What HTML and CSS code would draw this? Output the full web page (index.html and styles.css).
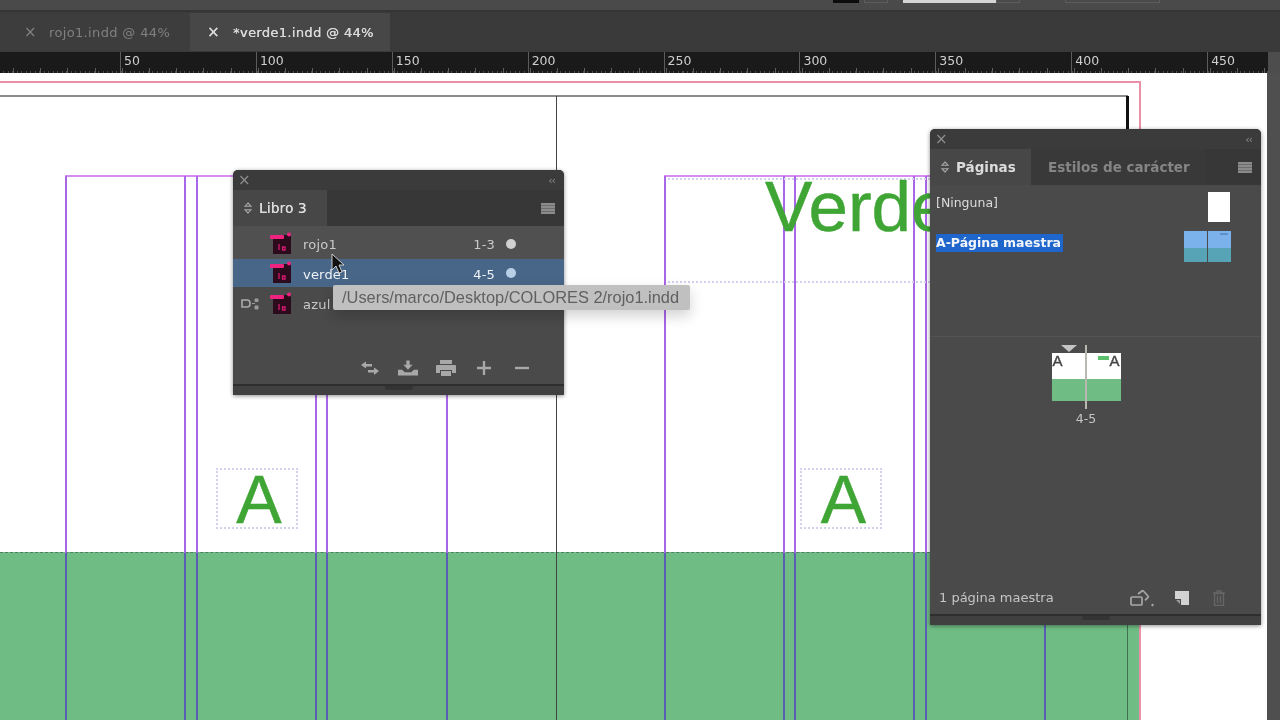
FILE: index.html
```html
<!DOCTYPE html>
<html lang="es">
<head>
<meta charset="utf-8">
<title>InDesign</title>
<link rel="stylesheet" href="styles.css">
</head>
<body>
<div class="app">
  <header class="topbar">
    <span class="ctl c-black"></span><span class="ctl c-box1"></span><span class="ctl c-white"></span><span class="ctl c-box2"></span><span class="ctl c-box3"></span>
  </header>
  <nav class="tabs">
    <div class="doc-tab doc-tab-off"><span class="x">×</span><span>rojo1.indd @ 44%</span></div>
    <div class="doc-tab doc-tab-on"><span class="x">×</span><span>*verde1.indd @ 44%</span></div>
  </nav>
  <div class="ruler-row">
    <div class="ruler">
      <span class="mark">50</span><span class="mark">100</span><span class="mark">150</span><span class="mark">200</span><span class="mark">250</span><span class="mark">300</span><span class="mark">350</span><span class="mark">400</span><span class="mark">450</span>
    </div>
    <div class="corner"></div>
  </div>
  <div class="work">
    <main class="canvas">
      <div class="green"></div>
      <div class="bleed"></div>
      <div class="page"></div>
      <div class="black-edge"></div>
      <div class="spine"></div>

      <div class="hguide hg-a"></div>
      <div class="hguide hg-b"></div>

      <div class="guide gx1"></div><div class="guide gx2"></div><div class="guide gx3"></div><div class="guide gx4"></div><div class="guide gx5"></div><div class="guide gx6"></div>
      <div class="guide gx7"></div><div class="guide gx8"></div><div class="guide gx9"></div><div class="guide gx10"></div><div class="guide gx11"></div><div class="guide gx12"></div>

      <div class="dots-h dh1"></div>
      <div class="dots-h dh2"></div>
      <div class="verde">Verde</div>
      <div class="frame-a fa1">A</div>
      <div class="frame-a fa2">A</div>

      <section class="panel book">
        <div class="ptitle"><span class="pclose">×</span><span class="pcollapse">‹‹</span></div>
        <div class="ptabs">
          <div class="ptab ptab-book"><svg class="updown" viewBox="0 0 8 12"><path d="M4 1 7 4.200H1zM4 11 1 7.800H7z" fill="none" stroke="#aaa" stroke-width="1.100"/></svg><span>Libro 3</span></div>
          <div class="ptab-fill"></div>
          <svg class="pmenu" viewBox="0 0 14 11"><path d="M0 0h14v11H0z" fill="#8b8b8b"/><path d="M0 2.500h14M0 5.500h14M0 8.500h14" stroke="#666" stroke-width=".8"/></svg>
        </div>
        <div class="rows">
          <div class="row">
            <span class="linkcell"></span>
            <svg class="idicon" viewBox="0 0 22 22"><rect x="3" y="3" width="18" height="19" fill="#2b0b1c"/><rect x="0" y="3" width="14" height="4" rx="1" fill="#f0227f"/><circle cx="19" cy="2.500" r="2" fill="#f0227f"/><path d="M9 12v6M12.500 15h2.500v3h-2.500z" stroke="#d81b70" stroke-width="1.300" fill="none"/></svg>
            <span class="rname">rojo1</span><span class="rpages">1-3</span><span class="dot"></span>
          </div>
          <div class="row row-sel">
            <span class="linkcell"></span>
            <svg class="idicon" viewBox="0 0 22 22"><rect x="3" y="3" width="18" height="19" fill="#2b0b1c"/><rect x="0" y="3" width="14" height="4" rx="1" fill="#f0227f"/><circle cx="19" cy="2.500" r="2" fill="#f0227f"/><path d="M9 12v6M12.500 15h2.500v3h-2.500z" stroke="#d81b70" stroke-width="1.300" fill="none"/></svg>
            <span class="rname">verde1</span><span class="rpages">4-5</span><span class="dot"></span>
          </div>
          <div class="row row-azul">
            <span class="linkcell"><svg class="synced" viewBox="0 0 18 14"><path d="M1 3h5a3 3 0 0 1 3 3v1a3 3 0 0 1-3 3H1z" fill="none" stroke="#aaa" stroke-width="1.600"/><path d="M11 6.500h3M14 2h3v2.500h-3zM14 9h3v3h-3z" stroke="#999" fill="#999"/></svg></span>
            <svg class="idicon" viewBox="0 0 22 22"><rect x="3" y="3" width="18" height="19" fill="#2b0b1c"/><rect x="0" y="3" width="14" height="4" rx="1" fill="#f0227f"/><circle cx="19" cy="2.500" r="2" fill="#f0227f"/><path d="M9 12v6M12.500 15h2.500v3h-2.500z" stroke="#d81b70" stroke-width="1.300" fill="none"/></svg>
            <span class="rname">azul</span>
          </div>
        </div>
        <div class="pfoot book-foot">
          <svg class="ficon" viewBox="0 0 20 16"><path d="M1 5 6 1.500V4h6v2.500H6V8.500zM19 11 14 7.500V10H8v2.500h6v2.500z" fill="#a8a8a8"/></svg>
          <svg class="ficon" viewBox="0 0 24 18"><path d="M10 0h4v5h3.500L12 11 6.500 5H10zM0 11h5l3 3h8l3-3h5v7H0z" fill="#a8a8a8"/></svg>
          <svg class="ficon" viewBox="0 0 20 16"><path d="M4 0h12v4H4zM1 5h18a1 1 0 0 1 1 1v7h-4V10H4v3H0V6a1 1 0 0 1 1-1zM5 11h10v5H5z" fill="#a8a8a8"/></svg>
          <svg class="ficon" viewBox="0 0 20 16"><path d="M10 1v14M3 8h14" stroke="#a8a8a8" stroke-width="2.400"/></svg>
          <svg class="ficon" viewBox="0 0 20 16"><path d="M3 8h14" stroke="#a8a8a8" stroke-width="2.400"/></svg>
        </div>
        <div class="pgrip"><span></span></div>
      </section>

      <section class="panel pages">
        <div class="ptitle"><span class="pclose">×</span><span class="pcollapse">‹‹</span></div>
        <div class="ptabs ptabs-pages">
          <div class="ptab ptab-pages"><svg class="updown" viewBox="0 0 8 12"><path d="M4 1 7 4.200H1zM4 11 1 7.800H7z" fill="none" stroke="#aaa" stroke-width="1.100"/></svg><span>Páginas</span></div>
          <div class="ptab-second">Estilos de carácter</div>
          <div class="ptab-fill"></div>
          <svg class="pmenu" viewBox="0 0 14 11"><path d="M0 0h14v11H0z" fill="#8b8b8b"/><path d="M0 2.500h14M0 5.500h14M0 8.500h14" stroke="#666" stroke-width=".8"/></svg>
        </div>
        <div class="masters">
          <div class="mrow m-none"><span class="mname">[Ninguna]</span><span class="thumb-none"></span></div>
          <div class="mrow m-a"><span class="mname mname-sel">A-Página maestra</span>
            <span class="thumb-a"><span class="thumb-pg"></span><span class="thumb-pg thumb-pg-tag"></span></span>
          </div>
        </div>
        <div class="spread-area">
          <div class="spread">
            <span class="tri"></span>
            <div class="sheet"><span class="sa sa-l">A</span><span class="sa sa-r">A</span><span class="tag"></span><span class="sgreen"></span></div>
            <span class="sline"></span>
          </div>
          <div class="slabel">4-5</div>
        </div>
        <div class="pfoot pages-foot">
          <span class="ftext">1 página maestra</span>
          <svg class="ficon2" viewBox="0 0 24 18"><path d="M2 8h9a1 1 0 0 1 1 1v6a1 1 0 0 1-1 1H2a1 1 0 0 1-1-1V9a1 1 0 0 1 1-1zM8 5l4-3a1 1 0 0 1 1.400 0l4.600 5a1 1 0 0 1 0 1.400l-3 3" fill="none" stroke="#a8a8a8" stroke-width="1.700"/><circle cx="22.500" cy="16" r="1.200" fill="#a8a8a8"/></svg>
          <svg class="ficon3" viewBox="0 0 14 14"><path d="M0 0h14v14H6V8H0z" fill="#d2d2d2"/><path d="M1 9h4v4z" fill="#999"/></svg>
          <svg class="ficon4" viewBox="0 0 14 16"><path d="M1 3h12M5 3V1h4v2M2.500 3.500h9V15.500h-9zM5.500 6v7M8.500 6v7" fill="none" stroke="#666" stroke-width="1.300"/></svg>
        </div>
        <div class="pgrip"><span></span></div>
      </section>

      <div class="tooltip">/Users/marco/Desktop/COLORES 2/rojo1.indd</div>
      <svg class="cursor" viewBox="0 0 14 22"><path d="M1 1v16l4-4 3 7 3-1-3-7h5z" fill="#111" stroke="#eee" stroke-width=".8"/></svg>
    </main>
    <aside class="scroll"></aside>
  </div>
</div>
</body>
</html>
```

FILE: styles.css
```css
* { box-sizing: border-box; }
html, body { margin: 0; height: 100%; overflow: hidden; background: #3b3b3b; }
body { font-family: "DejaVu Sans", "Liberation Sans", sans-serif; }

.app { width: 1280px; height: 720px; display: flex; flex-direction: column; filter: blur(0.55px); }

/* application chrome */
.topbar { height: 12px; background: #4a4a4a; border-bottom: 2px solid #353535; position: relative; flex: none; }
.ctl { position: absolute; top: 0; height: 3px; }
.c-black { left: 833px; width: 26px; background: #0d0d0d; }
.c-box1 { left: 864px; width: 24px; border: 1px solid #5d5d5d; border-top: 0; }
.c-white { left: 903px; width: 93px; background: #d5d5d5; }
.c-box2 { left: 996px; width: 24px; border: 1px solid #5d5d5d; border-top: 0; }
.c-box3 { left: 1065px; width: 95px; border: 1px solid #5d5d5d; border-top: 0; }

.tabs { height: 40px; display: flex; background: #3a3a3a; flex: none; }
.doc-tab { display: flex; align-items: center; font-size: 13px; letter-spacing: .35px; height: 38px; margin-top: 1px; font-weight: 500; }
.doc-tab .x { font-size: 15px; width: 19px; text-align: center; }
.doc-tab-off { width: 190px; padding-left: 21px; background: #3d3d3d; color: #808080; gap: 9px; }
.doc-tab-on { width: 200px; padding-left: 14px; background: #474747; color: #dadada; gap: 10px; text-shadow: .3px 0 0 #dadada; }

.ruler-row { height: 21px; display: flex; flex: none; }
.ruler {
  flex: 1; display: flex; padding-left: 120px; overflow: hidden; background-color: #1a1a1a;
  background-image:
    repeating-linear-gradient(90deg, #5c5c5c 0 1px, transparent 1px 27.200px),
    repeating-linear-gradient(90deg, #4c4c4c 0 1px, transparent 1px 4.530px);
  background-size: 100% 5px, 100% 2px;
  background-position: 12.800px 100%, 3px 100%;
  background-repeat: no-repeat;
}
.mark { flex: 0 0 135.900px; height: 21px; border-left: 1px solid #5c5c5c; padding-left: 3px; color: #cfcfcf; font-size: 12.500px; font-weight: 500; line-height: 17px; }
.corner { width: 12px; background: #4d4d4d; }

.work { flex: 1; display: flex; min-height: 0; }
.scroll { width: 13px; background: #4f4f4f; }

/* free canvas: coordinates below are document positions, y origin = 73 */
.canvas { flex: 1; position: relative; background: #fff; overflow: hidden; }
.green { position: absolute; left: 0; top: 479px; width: 1140px; bottom: 0; background: #6fbd85; border-top: 1px dashed #4f7f62; }
.bleed { position: absolute; left: -2px; top: 8px; width: 1143px; height: 700px; border: 2px solid #e98fa8; border-left: 0; }
.page { position: absolute; left: -2px; top: 22px; width: 1130px; height: 700px; border: 1px solid #666; border-top: 2px solid #8c8c8c; border-right-color: #3f7050; }
.black-edge { position: absolute; left: 1126px; top: 23px; width: 3px; height: 36px; background: #111; }
.spine { position: absolute; left: 556px; top: 23px; width: 1px; height: 630px; background: #444; }

.guide { position: absolute; top: 103px; bottom: 0; width: 2px; background: #a866e8; }
.guide::after { content: ""; position: absolute; left: 0; right: 0; top: 377px; bottom: 0; background: #5a5fb4; }
.gx1 { left: 65px; }  .gx2 { left: 184px; } .gx3 { left: 196px; } .gx4 { left: 315px; } .gx5 { left: 326px; } .gx6 { left: 446px; }
.gx7 { left: 664px; } .gx8 { left: 783px; } .gx9 { left: 794px; } .gx10 { left: 913px; } .gx11 { left: 925px; } .gx12 { left: 1044px; }
.hguide { position: absolute; top: 102px; height: 2px; background: #d58cf0; }
.hg-a { left: 65px; width: 382px; }
.hg-b { left: 664px; width: 382px; }

.dots-h { position: absolute; left: 668px; width: 270px; border-top: 2px dotted #d2d2ee; }
.dh1 { top: 105px; }
.dh2 { top: 208px; }
.verde { position: absolute; left: 765px; top: 89px; white-space: nowrap; font: 71px/90px "Liberation Sans", Arial, sans-serif; color: #3fa535; -webkit-text-stroke: .5px #3fa535; }
.frame-a { position: absolute; top: 395px; width: 82px; height: 61px; border: 2px dotted #d2d2ee; color: #3fa535; font: 68px/58px "Liberation Sans", Arial, sans-serif; text-align: center; -webkit-text-stroke: .5px #3fa535; }
.fa1 { left: 216px; padding-left: 4px; }
.fa2 { left: 800px; padding-left: 5px; }

/* floating panels */
.panel { position: absolute; display: flex; flex-direction: column; background: #4a4a4a; border-radius: 5px 5px 1px 1px; box-shadow: 0 1px 4px rgba(0,0,0,.45); color: #c9c9c9; width: 331px; }
.book { left: 233px; top: 97px; height: 225px; }
.pages { left: 930px; top: 56px; height: 496px; }

.ptitle { height: 20px; background: #3b3b3b; border-radius: 5px 5px 0 0; display: flex; align-items: center; justify-content: space-between; padding: 0 9px 0 5px; flex: none; color: #8d8d8d; }
.pclose { font-size: 15px; width: 12px; text-align: center; }
.pcollapse { font-size: 11px; letter-spacing: -1px; }
.ptabs { height: 36px; background: #373737; display: flex; align-items: center; flex: none; padding-right: 9px; }
.ptab { height: 36px; background: #474747; display: flex; align-items: center; gap: 7px; padding-left: 11px; font-size: 13.500px; font-weight: 500; color: #dcdcdc; letter-spacing: .2px; text-shadow: .3px 0 0 #dcdcdc; }
.ptab-book { width: 94px; }
.ptab-pages { width: 101px; font-weight: 700; letter-spacing: 0; text-shadow: none; }
.ptab-second { width: 174px; height: 36px; padding-left: 17px; display: flex; align-items: center; font-size: 13.500px; font-weight: 700; color: #858585; background: #393939; white-space: nowrap; }
.ptab-fill { flex: 1; }
.updown { width: 8px; height: 12px; }
.pmenu { width: 14px; height: 11px; display: block; }

.rows { display: flex; flex-direction: column; padding-top: 4px; }
.row { height: 30px; background: #505050; display: flex; align-items: center; font-size: 13px; letter-spacing: .2px; padding-right: 48px; }
.rows .row:first-child { margin-top: -4px; height: 33px; padding-top: 3px; }
.row-sel { background: #486688; color: #eef2f6; height: 28px; margin-bottom: 2px; }
.row-sel .rname, .row-sel .rpages { margin-top: 2px; }
.row-azul { background: #4a4a4a; }
.linkcell { width: 37px; height: 14px; display: flex; padding-left: 8px; }
.synced { width: 18px; height: 14px; }
.idicon { width: 22px; height: 22px; flex: none; margin-top: -3px; }
.rname { flex: 1; padding-left: 11px; }
.rpages { margin-right: 11px; }
.dot { width: 10px; height: 10px; border-radius: 50%; background: #d0d0d0; }
.row-sel .dot { background: #b9cfe8; }

.pfoot { display: flex; align-items: center; flex: none; }
.book-foot { flex: 1; justify-content: flex-end; gap: 18px; padding: 32px 32px 0 0; }
.ficon { width: 20px; height: 16px; }
.pgrip { height: 11px; background: #404040; border-top: 2px solid #2e2e2e; display: flex; justify-content: center; flex: none; }
.pgrip span { width: 28px; height: 4px; background: #343434; border-radius: 0 0 3px 3px; }

.masters { height: 152px; border-bottom: 1px solid #535353; padding-top: 7px; flex: none; }
.mrow { display: flex; justify-content: space-between; font-size: 12.500px; font-weight: 500; padding: 0 30px 0 6px; color: #dcdcdc; }
.m-none { height: 39px; padding-right: 31px; }
.thumb-none { width: 22px; height: 30px; background: #fff; }
.mname-sel { background: #1f66cc; color: #f2f6fb; height: 18px; margin-top: 3px; font-weight: 700; padding-right: 2px; }
.mname { line-height: 22px; }
.mname-sel { line-height: 18px; }
.thumb-a { display: flex; gap: 1px; }
.thumb-pg { width: 23px; height: 31px; background: linear-gradient(#7cb2ec 0 17px, #56a4b6 17px); }
.thumb-pg-tag { box-shadow: inset 0 0 0 0 transparent; background: linear-gradient(#5f8fc4, #5f8fc4) 12px 2px / 8px 2px no-repeat, linear-gradient(#7cb2ec 0 17px, #56a4b6 17px); }

.spread-area { flex: 1; display: flex; flex-direction: column; align-items: center; padding: 8px 19px 0 0; font-size: 12.500px; }
.spread { width: 69px; height: 64px; position: relative; }
.tri { position: absolute; left: 9px; top: 0; border: 7px solid transparent; border-top-color: #c4c4c4; border-bottom: 0; border-left-width: 8px; border-right-width: 8px; }
.sheet { position: absolute; left: 0; top: 8px; width: 69px; height: 48px; background: #fff; overflow: hidden; color: #444; }
.sgreen { position: absolute; left: 0; right: 0; bottom: 0; height: 22px; background: #6fbd85; }
.sa { position: absolute; top: 0; font: 400 15px/15px "Liberation Sans", sans-serif; -webkit-text-stroke: .4px #444; }
.sa-l { left: 1px; }
.sa-r { right: 1px; }
.tag { position: absolute; left: 46px; top: 3px; width: 11px; height: 4px; background: #5cc06a; }
.sline { position: absolute; left: 33px; top: 0; width: 2px; height: 64px; background: #b8b8b0; }
.slabel { margin-top: 2px; font-weight: 500; color: #c5c5c5; }

.pages-foot { height: 36px; padding: 3px 0 0 9px; font-size: 13px; font-weight: 500; color: #c5c5c5; }
.ftext { width: 190px; }
.ficon2 { width: 24px; height: 18px; margin-left: 1px; }
.ficon3 { width: 14px; height: 14px; margin-left: 21px; }
.ficon4 { width: 14px; height: 16px; margin-left: 23px; }

.tooltip { position: absolute; left: 333px; top: 212px; width: 357px; height: 25px; padding-left: 9px; background: #c0c0c0; color: #606060; font: 16.400px/24px "Liberation Sans", Arial, sans-serif; border-radius: 2px; box-shadow: 0 6px 14px rgba(0,0,0,.18); white-space: nowrap; }
.cursor { position: absolute; left: 331px; top: 180px; width: 14px; height: 22px; }
```
